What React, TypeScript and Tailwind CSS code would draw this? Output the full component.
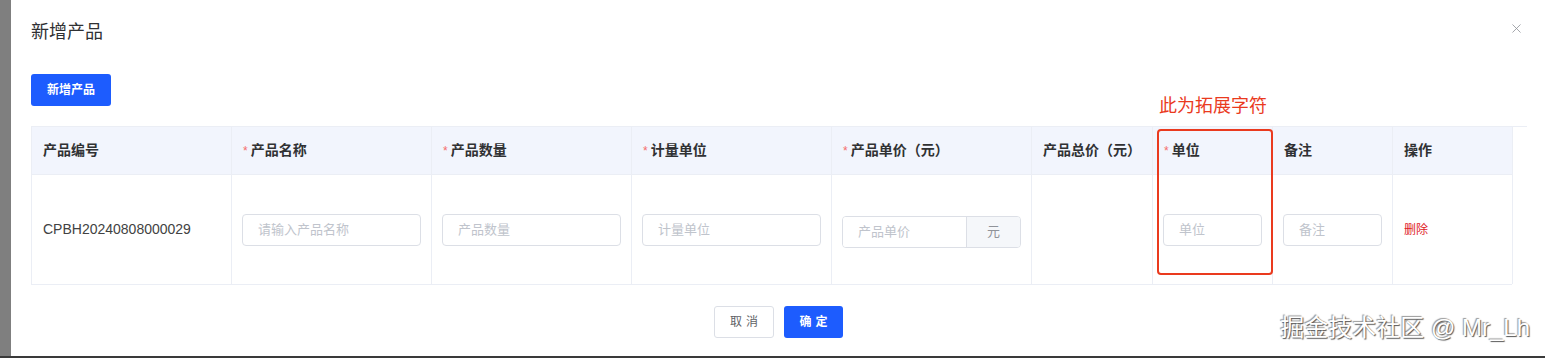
import { X } from "lucide-react";

const font = {
  fontFamily: '"Liberation Sans", "Noto Sans CJK SC", sans-serif',
};

const cols = [
  { label: "产品编号", required: false },
  { label: "产品名称", required: true },
  { label: "产品数量", required: true },
  { label: "计量单位", required: true },
  { label: "产品单价（元）", required: true },
  { label: "产品总价（元）", required: false },
  { label: "单位", required: true },
  { label: "备注", required: false },
  { label: "操作", required: false },
];

const gridCols =
  "grid grid-cols-[200px_200px_200px_200px_200px_121px_120px_120px_120px]";

function TextInput({ placeholder, width }: { placeholder: string; width: string }) {
  return (
    <input
      readOnly
      placeholder={placeholder}
      className={`${width} h-[32px] rounded-[4px] border border-[#dcdfe6] bg-white px-[15px] text-[13px] text-[#333] outline-none placeholder:text-[#c0c4cc]`}
      style={font}
    />
  );
}

export default function App() {
  return (
    <div
      className="relative flex h-[358px] w-[1545px] overflow-hidden bg-white"
      style={font}
    >
      <div className="w-[11px] shrink-0 bg-[#7f7f7f]" />

      <div className="relative flex flex-1 flex-col pl-[20px] pt-[20px]">
        <div className="flex items-center justify-between pr-[21px]">
          <h2 className="text-[18px] leading-[24px] text-[#303133]">新增产品</h2>
          <X className="size-[15px] text-[#909399] -mt-[8px]" strokeWidth={1.3} />
        </div>

        <div className="mt-[30px]">
          <button className="h-[32px] w-[80px] rounded-[3px] bg-[#1d5cfe] text-[12px] font-bold text-white">
            新增产品
          </button>
        </div>

        <div className="mt-[20px] w-[1496px] border-t border-[#ebeef5]">
          <div className="relative w-[1481px] border-l border-[#ebeef5]">
            <div className={`${gridCols} h-[48px] bg-[#f2f5fd]`}>
              {cols.map((c) => (
                <div
                  key={c.label}
                  className="flex items-center border-b border-r border-[#ebeef5] px-[11px] text-[14px] font-bold text-[#303133]"
                >
                  {c.required && (
                    <span className="mr-[3px] text-[12px] font-normal text-[#f56c6c]">*</span>
                  )}
                  {c.label}
                </div>
              ))}
            </div>

            <div className={`${gridCols} h-[110px] border-b border-[#ebeef5]`}>
              <div className="flex items-center border-r border-[#ebeef5] px-[11px] text-[14px] text-[#424242]">
                CPBH20240808000029
              </div>
              <div className="flex items-center border-r border-[#ebeef5] px-[10px]">
                <TextInput placeholder="请输入产品名称" width="w-[179px]" />
              </div>
              <div className="flex items-center border-r border-[#ebeef5] px-[10px]">
                <TextInput placeholder="产品数量" width="w-[179px]" />
              </div>
              <div className="flex items-center border-r border-[#ebeef5] px-[10px]">
                <TextInput placeholder="计量单位" width="w-[179px]" />
              </div>
              <div className="flex items-center border-r border-[#ebeef5] px-[10px] pt-[5px]">
                <div className="flex h-[32px] w-[179px] overflow-hidden rounded-[4px] border border-[#dcdfe6]">
                  <input
                    readOnly
                    placeholder="产品单价"
                    className="w-[124px] border-r border-[#dcdfe6] bg-white px-[15px] text-[13px] outline-none placeholder:text-[#c0c4cc]"
                    style={font}
                  />
                  <div className="flex flex-1 items-center justify-center bg-[#f5f7fa] text-[13px] text-[#909399]">
                    元
                  </div>
                </div>
              </div>
              <div className="border-r border-[#ebeef5]" />
              <div className="flex items-center border-r border-[#ebeef5] px-[10px]">
                <TextInput placeholder="单位" width="w-[99px]" />
              </div>
              <div className="flex items-center border-r border-[#ebeef5] px-[10px]">
                <TextInput placeholder="备注" width="w-[99px]" />
              </div>
              <div className="flex items-center border-r border-[#ebeef5] px-[11px] text-[12px] text-[#e0201f]">
                删除
              </div>
            </div>

            <div className="pointer-events-none absolute left-[1125px] top-[2px] h-[146px] w-[116px] rounded-[4px] border-2 border-[#ea3a1e]" />
            <div className="absolute left-[1127px] top-[-33px] text-[18px] leading-[24px] text-[#ea3a1e]">
              此为拓展字符
            </div>
          </div>
        </div>

        <div className="mt-[21px] flex justify-center gap-[10px] pr-[19px]">
          <button className="h-[32px] w-[60px] rounded-[3px] border border-[#dcdfe6] bg-white text-[12px] tracking-[4px] text-[#606266] indent-[4px]">
            取消
          </button>
          <button className="h-[32px] w-[59px] rounded-[3px] bg-[#1d5cfe] text-[12px] font-bold tracking-[4px] text-white indent-[4px]">
            确定
          </button>
        </div>

        <div
          className="absolute right-[15px] top-[313px] text-[24px] leading-[30px] text-white"
          style={{ textShadow: "1px 1px 1px #555, -1px -1px 1px #999" }}
        >
          掘金技术社区 @ Mr_Lh
        </div>
      </div>

      <div className="absolute bottom-0 left-0 h-[2px] w-full bg-[#3a3a3a]" />
    </div>
  );
}
